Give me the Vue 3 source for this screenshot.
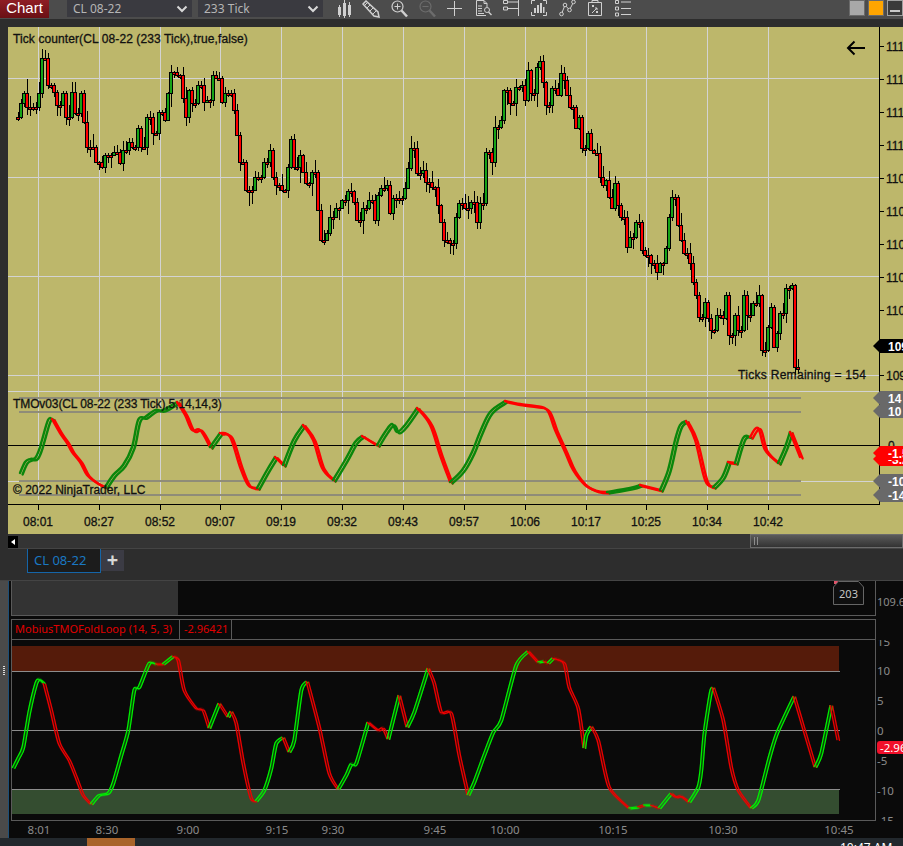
<template>
  <div class="page">
    <!-- верхняя панель -->
    <div class="toolbar">
      <div class="chart-btn">Chart</div>
      <div class="select first"><span>CL 08-22</span><svg width="12" height="8" viewBox="0 0 12 8"><path d="M1.5 1.5 6 6l4.5-4.5" fill="none" stroke="#d8d8d8" stroke-width="2"/></svg></div>
      <div class="select"><span>233 Tick</span><svg width="12" height="8" viewBox="0 0 12 8"><path d="M1.5 1.5 6 6l4.5-4.5" fill="none" stroke="#d8d8d8" stroke-width="2"/></svg></div>
      <div class="tools">
        <svg class="tool" style="width:15px" viewBox="0 0 15 18"><path d="M1 7h3v8H1zM6 3h3v13H6zM11 5h3v10h-3z" fill="#d0d0d0"/><path d="M2.500 5v12M7.500 0v18M12.500 2v15" stroke="#d0d0d0" fill="none"/></svg>
        <svg class="tool" style="width:18px;margin-left:10px" viewBox="0 0 18 18"><path d="M1 4 4 1l12 11 1 5-5-1z" fill="none" stroke="#d0d0d0" stroke-width="1.500"/><path d="M2 6l3-3M5 8l3-3M8 11l3-3M11 14l3-3" stroke="#d0d0d0"/></svg>
        <svg class="tool" style="width:17px;margin-left:11px" viewBox="0 0 17 18"><circle cx="6.500" cy="6.500" r="5.500" fill="none" stroke="#d0d0d0" stroke-width="1.200"/><path d="M3.500 6.500h6M6.500 3.500v6" stroke="#d0d0d0"/><path d="M10.500 10.500l5.500 6" stroke="#d0d0d0" stroke-width="2.500"/></svg>
        <svg class="tool" style="width:17px;margin-left:11px" viewBox="0 0 17 18"><circle cx="6.500" cy="6.500" r="5.500" fill="none" stroke="#6c6c6c" stroke-width="1.200"/><path d="M3.500 6.500h6" stroke="#6c6c6c"/><path d="M10.500 10.500l5.500 6" stroke="#6c6c6c" stroke-width="2.500"/></svg>
        <svg class="tool" style="width:15px;margin-left:11px" viewBox="0 0 15 18"><path d="M0 8.500h15M7.500 1v15" stroke="#d0d0d0" fill="none"/></svg>
        <svg class="tool" style="width:17px;margin-left:13px" viewBox="0 0 17 18"><path d="M9 .5H1.500v15H11M9 .5l3 3V7M9 .5v3h3" fill="none" stroke="#d0d0d0"/><path d="M3 6h4M3 8.500h4M3 11h4M3 13.500h6" stroke="#d0d0d0"/><circle cx="12" cy="10" r="2.500" fill="none" stroke="#d0d0d0"/><path d="M13.500 12l3 3" stroke="#d0d0d0" stroke-width="1.400"/></svg>
        <svg class="tool" style="width:16px;margin-left:11px" viewBox="0 0 16 18"><path d="M.5.500h4v3h-4zM.5 7h4v3h-4z" fill="none" stroke="#d0d0d0"/><path d="M4.500 2h11M4.500 8.500h11M15.500 0v16" stroke="#d0d0d0" fill="none"/></svg>
        <svg class="tool" style="width:16px;margin-left:12px" viewBox="0 0 16 18"><path d="M.5 4V.500h3.500M12 .5h3.500V4M.5 12v3.500H4M12 15.500h3.500V12" fill="none" stroke="#d0d0d0"/><path d="M3 8h2v5H3zM6 5h2v8H6zM9 3h2v10H9zM12 7h1.500v6H12z" fill="#d0d0d0"/></svg>
        <svg class="tool" style="width:17px;margin-left:12px" viewBox="0 0 17 18"><path d="M2.500 14 6 5l4.500 5 4-8" fill="none" stroke="#d0d0d0"/><circle cx="2.500" cy="14" r="1.800" fill="#4c4c4c" stroke="#d0d0d0"/><circle cx="6" cy="5" r="1.800" fill="#4c4c4c" stroke="#d0d0d0"/><circle cx="10.500" cy="10" r="1.800" fill="#4c4c4c" stroke="#d0d0d0"/><circle cx="14.500" cy="2" r="1.800" fill="#4c4c4c" stroke="#d0d0d0"/></svg>
        <svg class="tool" style="width:14px;margin-left:12px" viewBox="0 0 14 18"><path d="M.5 2.500h13v13H.5zM4 2.500V.500h6v2" fill="none" stroke="#d0d0d0"/><path d="M4 5l2 2M6 5 4 7M8 11l2 2M10 11l-2 2M4 13l5-5M7 8h2v2" stroke="#d0d0d0" fill="none"/></svg>
        <svg class="tool" style="width:16px;margin-left:13px" viewBox="0 0 16 18"><path d="M.5.500h3v3h-3zM.5 7h3v3h-3zM.5 13h3v3h-3z" fill="none" stroke="#d0d0d0"/><path d="M6 2h10M6 8.500h10M6 14.500h10" stroke="#d0d0d0"/></svg>
      </div>
      <div class="win-btns">
        <div class="win-btn gray"></div>
        <div class="win-btn orange"></div>
        <div class="win-btn min"><i></i></div>
      </div>
    </div>

    <!-- основной график -->
    <div class="chart">
      <svg class="plot" width="895" height="507" viewBox="8 27 895 507">
        <rect x="8" y="27" width="895" height="507" fill="#bdb76b" />
        <g shape-rendering="crispEdges" stroke="#d3d3d3" fill="none">
          <path v-for="x in gridX" :key="x" :d="`M${x + 0.5} 27V500`" />
          <path v-for="y in [78, 177, 276, 375, 391, 481]" :key="y" :d="`M8 ${y + 0.5}H879`" />
        </g>

        <path :d="wicks" stroke="#000" fill="none" shape-rendering="crispEdges" />
        <g shape-rendering="crispEdges" stroke="#000">
          <rect v-for="b in bars" :key="b.x" :x="b.x - 1.5" :y="b.y + 0.5" width="3" :height="b.h" :fill="b.up ? '#17a317' : '#ff0000'" />
        </g>

        <text class="t-main sp-a" x="13" y="43">Tick counter(CL 08-22 (233 Tick),true,false)</text>
        <path d="M865 48H848M854.500 41.500 848 48l6.500 6.500" fill="none" stroke="#000" stroke-width="2" />
        <text class="t-main sp-b" x="738" y="379">Ticks Remaining = 154</text>

        <!-- индикатор -->
        <g stroke="#8f8c78" stroke-width="2" shape-rendering="crispEdges">
          <path v-for="y in [398, 412, 481, 495]" :key="y" :d="`M19 ${y}H801`" />
        </g>
        <path d="M8 445.500H879" stroke="#000" shape-rendering="crispEdges" />
        <g v-for="(s, i) in tmoPaths" :key="i" fill="none" stroke-width="2.400" stroke-linecap="round" :stroke="s.c === 'g' ? '#0b860b' : '#ff0000'">
          <path :d="s.d" />
          <path :d="s.d" transform="translate(2.600 1.400)" />
        </g>
        <text class="t-main sp-c" x="13" y="408">TMOv03(CL 08-22 (233 Tick),5,14,14,3)</text>
        <text class="t-main" x="13" y="494">© 2022 NinjaTrader, LLC</text>

        <!-- оси -->
        <path d="M879.500 27V504.500H8" fill="none" stroke="#000" shape-rendering="crispEdges" />
        <g shape-rendering="crispEdges" stroke="#000">
          <path v-for="t in timeLabels" :key="t.l" :d="`M${t.x + 0.5} 505v5`" />
          <path v-for="p in priceLabels" :key="p.y" :d="`M880 ${p.y + 0.5}h4`" />
        </g>
        <text v-for="t in timeLabels" :key="t.l" class="t-main" :x="t.x" y="526" text-anchor="middle">{{ t.l }}</text>
        <text v-for="p in priceLabels" :key="p.y" class="t-main" x="886" :y="p.y + 5">{{ p.l }}</text>

        <text class="t-main" x="888" y="450">0</text>
        <template v-for="f in flags" :key="f.y">
          <polygon :points="`873,${f.y} 880,${f.y - 7} 903,${f.y - 7} 903,${f.y + 7} 880,${f.y + 7}`" :fill="f.c" />
          <text class="t-flag" x="888" :y="f.y + 5">{{ f.l }}</text>
        </template>
      </svg>
    </div>

    <!-- скролл -->
    <div class="scroll-row">
      <div class="scroll-left"><i></i></div>
      <div class="scroll-thumb"><b></b><b></b></div>
    </div>

    <!-- вкладки -->
    <div class="tabs">
      <div class="tab">CL 08-22</div>
      <div class="tab-add">+</div>
    </div>

    <!-- нижнее окно -->
    <div class="lower">
      <div class="grip"><i v-for="n in 5" :key="n"></i></div>
      <svg class="low-plot" width="895" height="257" viewBox="8 581 895 257">
        <rect x="8" y="581" width="895" height="257" fill="#0a0a0a" />
        <path d="M8.500 581V838" stroke="#1d4f78" shape-rendering="crispEdges" />
        <rect x="11" y="581" width="167" height="34" fill="#333" />
        <g fill="none" stroke="#5a5a5a" shape-rendering="crispEdges">
          <path d="M11.500 581V615.500H875.500V581" />
          <path d="M11.500 619.500H875.500V820.500H11.500Z" />
          <path d="M11.500 639.500H875.500M179.500 620V639M231.500 620V639" />
        </g>
        <path d="M834 581h4l-1 3h-3z" fill="#e0556a" />
        <path d="M833.500 587l5-5.500h20l5 5.500v17.500h-30z" fill="#0f0f0f" stroke="#666" />
        <text class="t-low" x="848.500" y="598" text-anchor="middle" fill="#c4c4c4">203</text>
        <text class="t-low" x="877" y="606" fill="#8a8a8a">109.6</text>

        <text class="t-low t-title" x="15" y="633">MobiusTMOFoldLoop (14, 5, 3)</text>
        <text class="t-low t-title" x="184" y="633">-2.96421</text>

        <rect x="12" y="646" width="827" height="25" fill="#551b0a" />
        <rect x="12" y="789" width="827" height="25" fill="#344d30" />
        <g stroke="#8c8c8c" shape-rendering="crispEdges">
          <path d="M12 671.500H840M12 730.500H840M12 789.500H840" />
        </g>
        <g v-for="(s, i) in lowPaths" :key="i" fill="none" :stroke="s.c === 'g' ? '#00f000' : '#ee0000'">
          <path :d="s.d" stroke-width="4" opacity="0.25" transform="translate(1.200 0.400)" />
          <path :d="s.d" stroke-width="1.200" />
          <path :d="s.d" stroke-width="1.200" transform="translate(2.600 0.800)" />
        </g>

        <text v-for="a in lowAxis" :key="a.l" class="t-axis" x="877" :y="a.y">{{ a.l }}</text>
        <rect x="876" y="634" width="27" height="6" fill="#0a0a0a" />
        <rect x="876" y="821" width="27" height="17" fill="#0a0a0a" />
        <rect x="877" y="741" width="30" height="13" rx="3" fill="#f0102a" />
        <text class="t-axis t-badge" x="880" y="752">-2.96</text>
        <text v-for="t in lowTimes" :key="t.l" class="t-axis" :x="t.x" y="834" text-anchor="middle">{{ t.l }}</text>
      </svg>
    </div>

    <div class="status">
      <div class="status-orange"></div>
      <span class="status-time">10:47 AM</span>
    </div>
  </div>
</template>

<script setup>
// опорные точки цены (x,y в пикселях экрана)
const pricePts = '18,117 20,103 25,93 27,107 35,107 38,93 42,58 50,60 50,85 53,92 58,105 63,93 68,117 72,92 77,113 80,93 83,122 88,147 93,147 97,162 103,167 107,155 117,152 118,163 125,150 128,170 128,142 135,147 137,128 143,147 148,117 157,133 160,112 165,120 168,93 173,72 180,75 182,98 185,117 190,90 193,103 200,85 203,102 210,100 212,75 218,78 222,102 227,93 232,93 235,110 237,135 238,147 242,162 245,157 247,190 260,177 265,162 270,150 273,177 278,185 283,190 288,167 292,139 295,167 300,155 303,172 308,183 313,172 319,177 319,210 323,240 328,233 332,217 337,208 345,200 350,191 353,202 360,220 365,208 370,200 375,220 377,195 382,188 387,185 389,213 393,198 400,198 405,188 407,168 412,148 416,148 418,173 423,170 428,182 435,187 438,205 442,222 445,240 452,243 455,217 460,203 468,208 473,202 477,222 483,203 485,185 487,152 492,162 493,137 497,127 500,120 503,90 508,90 512,103 517,87 523,85 525,100 528,70 533,93 537,67 542,61 543,82 548,105 555,88 560,95 562,73 566,80 568,95 572,107 575,128 580,117 583,148 588,133 590,150 597,153 598,177 603,185 608,180 610,197 613,208 617,183 619,205 622,217 627,247 632,237 637,222 642,250 647,255 652,263 657,272 662,263 665,248 670,217 674,197 678,225 682,240 685,253 690,263 692,282 695,295 700,317 705,302 708,318 713,330 718,315 725,318 727,295 730,335 735,315 740,330 743,295 750,315 755,303 760,295 763,350 768,327 771,307 773,347 778,333 782,313 787,288 792,285 793,320 797,367 800,346'
  .split(' ').map((p) => p.split(',').map(Number))

const rnd = (() => {
  let s = 20220815
  return () => {
    s = (s * 1664525 + 1013904223) % 4294967296
    return s / 4294967296
  }
})()

// ближайшая опорная точка — так тела свечей выходят высокими, как на бирже
const priceAt = (x) => {
  let best = pricePts[0]
  for (const p of pricePts) {
    if (Math.abs(p[0] - x) <= Math.abs(best[0] - x)) best = p
  }
  return best[1]
}

const bars = []
let wicks = ''
let prev = priceAt(15)
for (let x = 18; x <= 800; x += 3) {
  const close = priceAt(x)
  const top = Math.min(prev, close)
  const bot = Math.max(prev, close)
  const h = Math.max(bot - top, 2)
  bars.push({ x, y: top, h, up: close < prev })
  const hi = top - 1 - Math.round(rnd() * rnd() * 14)
  const lo = top + h + 1 + Math.round(rnd() * rnd() * 16)
  wicks += `M${x + 0.5} ${hi}V${lo}`
  prev = close
}

const gridX = [38, 99, 160, 220, 281, 342, 403, 464, 525, 586, 646, 707, 768]
const times = ['08:01', '08:27', '08:52', '09:07', '09:19', '09:32', '09:43', '09:57', '10:06', '10:17', '10:25', '10:34', '10:42']
const timeLabels = gridX.map((x, i) => ({ x, l: times[i] }))

const priceLabels = [
  { y: 46, l: '111.50' }, { y: 79, l: '111.25' }, { y: 112, l: '111.00' }, { y: 145, l: '111.75' },
  { y: 178, l: '110.50' }, { y: 211, l: '110.25' }, { y: 244, l: '110.00' }, { y: 277, l: '110.75' },
  { y: 310, l: '110.50' }, { y: 375, l: '109.75' },
]

const flags = [
  { y: 346, l: '109.80', c: '#000' },
  { y: 398, l: '14', c: '#696969' },
  { y: 411, l: '10', c: '#696969' },
  { y: 459, l: '-3.20', c: '#ff0000' },
  { y: 453, l: '-1.50', c: '#ff0000' },
  { y: 481, l: '-10', c: '#696969' },
  { y: 495, l: '-14', c: '#696969' },
]

// сглаживание ломаной в кривую (Catmull-Rom)
const smooth = (str, t) => {
  const p = str.split(' ').map((q) => q.split(',').map(Number))
  let d = `M${p[0][0]} ${p[0][1]}`
  for (let i = 0; i < p.length - 1; i++) {
    const a = p[i - 1] || p[i]
    const b = p[i]
    const c = p[i + 1]
    const e = p[i + 2] || c
    d += `C${b[0] + (c[0] - a[0]) * t} ${b[1] + (c[1] - a[1]) * t} ${c[0] - (e[0] - b[0]) * t} ${c[1] - (e[1] - b[1]) * t} ${c[0]} ${c[1]}`
  }
  return d
}

// сегменты TMO: g — растёт, r — падает
const tmoSegs = [
  ['g', '20,473 25,462 30,459 35,458 39,450 42,440 48,420 52,419'],
  ['r', '52,419 60,433 67,443 72,452 80,462 87,475 97,483 105,487'],
  ['g', '105,487 113,475 123,465 132,447 138,420 145,417 155,410 163,410 177,402'],
  ['r', '177,402 185,415 192,430 200,430 210,447'],
  ['g', '210,447 220,433'],
  ['r', '220,433 230,437 240,467 248,485 257,488'],
  ['g', '257,488 267,470 275,457'],
  ['r', '275,457 283,465'],
  ['g', '283,465 293,440 303,425'],
  ['r', '303,425 313,440 322,468 333,480'],
  ['g', '333,480 345,460 355,442 362,436'],
  ['r', '362,436 370,441 377,445'],
  ['g', '377,445 385,432 392,424 397,432 405,425 417,408'],
  ['r', '417,408 430,425 440,455 450,482'],
  ['g', '450,482 462,470 472,452 480,432 490,412 505,401'],
  ['r', '505,401 520,404 535,406 547,410 555,430 565,452 573,470 585,485 597,491 607,492'],
  ['g', '607,492 630,488 640,485'],
  ['r', '640,485 660,490'],
  ['g', '660,490 668,470 675,440 680,425 686,421'],
  ['r', '686,421 695,440 705,480 713,487'],
  ['g', '713,487 722,477 728,462'],
  ['r', '728,462 735,463'],
  ['g', '735,463 743,438 750,437'],
  ['r', '750,437 758,428 765,450 778,463'],
  ['g', '778,463 785,447 790,432'],
  ['r', '790,432 800,457'],
]
const tmoPaths = tmoSegs.map((s) => ({ c: s[0], d: smooth(s[1], 0.18) }))

// сегменты нижнего осциллятора
const lowSegs = [
  ['g', '12,768 17,758 22,747 28,712 35,683 38,679 43,683'],
  ['r', '43,683 50,710 58,743 68,760 75,777 82,795 90,804'],
  ['g', '90,804 98,795 107,793 112,783 120,755 127,730 133,690 138,687 148,663 155,664'],
  ['r', '155,664 162,664'],
  ['g', '162,664 172,656'],
  ['r', '172,656 177,660 183,690 195,708 202,710 208,728'],
  ['g', '208,728 218,703'],
  ['r', '218,703 227,717'],
  ['g', '227,717 230,711'],
  ['r', '230,711 235,723 242,763 250,798 255,801'],
  ['g', '255,801 263,790 270,768 275,743 282,737'],
  ['r', '282,737 288,752'],
  ['g', '288,752 293,740 300,690 306,681'],
  ['r', '306,681 318,727 328,773 337,789'],
  ['g', '337,789 345,775 350,764 355,763 367,722'],
  ['r', '367,722 377,730 382,728 387,739'],
  ['g', '387,739 398,695'],
  ['r', '398,695 406,727'],
  ['g', '406,727 413,712 427,668'],
  ['r', '427,668 433,683 440,712 450,713 458,755 467,795'],
  ['g', '467,795 473,782 483,755 492,732 500,720 515,665 527,651'],
  ['r', '527,651 537,662'],
  ['g', '537,662 543,661'],
  ['r', '543,661 547,663'],
  ['g', '547,663 552,658'],
  ['r', '552,658 563,663 568,687 577,708 583,748'],
  ['g', '583,748 585,735 590,726'],
  ['r', '590,726 597,740 608,787 628,808'],
  ['g', '628,808 637,807'],
  ['r', '637,807 643,805'],
  ['g', '643,805 650,805'],
  ['r', '650,805 658,808'],
  ['g', '658,808 670,793'],
  ['r', '670,793 675,797 680,796 688,802'],
  ['g', '688,802 697,787 700,770 703,735 707,707 710,690 712,687'],
  ['r', '712,687 722,720 730,767 737,790 750,808'],
  ['g', '750,808 757,800 768,758 775,735 783,717 793,696'],
  ['r', '793,696 803,730 814,767'],
  ['g', '814,767 820,753 830,705'],
  ['r', '830,705 837,740'],
]
const lowPaths = lowSegs.map((s) => ({ c: s[0], d: smooth(s[1], 0.12) }))

const lowAxis = [
  { y: 646, l: '15' }, { y: 675, l: '10' }, { y: 705, l: '5' }, { y: 735, l: '0' },
  { y: 765, l: '-5' }, { y: 795, l: '-10' }, { y: 825, l: '-15' },
]

const lowTimes = [
  { x: 39, l: '8:01' }, { x: 107, l: '8:30' }, { x: 188, l: '9:00' }, { x: 277, l: '9:15' }, { x: 333, l: '9:30' },
  { x: 435, l: '9:45' }, { x: 505, l: '10:00' }, { x: 613, l: '10:15' }, { x: 723, l: '10:30' }, { x: 839, l: '10:45' },
]
</script>

<style scoped>
.page {
  width: 903px;
  height: 846px;
  overflow: hidden;
  display: flex;
  flex-direction: column;
  background: #2d2d2d;
  font-family: "Liberation Sans", Arial, sans-serif;
}

.toolbar {
  height: 19px;
  flex-shrink: 0;
  display: flex;
  align-items: flex-start;
  background: #4c4c4c;
  margin-bottom: 8px;
}

.chart-btn {
  width: 49px;
  height: 18px;
  line-height: 16px;
  text-align: center;
  color: #fff;
  font-size: 15px;
  background: linear-gradient(#8f1d24, #6a1015);
}

.select {
  width: 125px;
  height: 17px;
  margin-left: 6px;
  padding: 0 4px 0 6px;
  box-sizing: border-box;
  display: flex;
  align-items: center;
  justify-content: space-between;
  background: #3a3a40;
  color: #b5b5b5;
  font-family: "Noto Sans", sans-serif;
  font-size: 12px;
}

.select.first {
  margin-left: 18px;
}

.tools {
  display: flex;
  margin-left: 14px;
}

.tool {
  height: 18px;
  flex-shrink: 0;
}

.win-btns {
  margin-left: auto;
  display: flex;
  gap: 3px;
}

.win-btn {
  width: 16px;
  height: 16px;
  border: 1px solid #6a6a6a;
  box-sizing: border-box;
}

.win-btn.gray {
  background: #a8a8a8;
}

.win-btn.orange {
  background: #ffa500;
}

.win-btn.min {
  background: #3a3a3a;
  border-color: #a0a0a0;
  position: relative;
}

.win-btn.min i {
  position: absolute;
  left: 2px;
  right: 2px;
  bottom: 3px;
  height: 2px;
  background: #c8c8c8;
}

.chart {
  margin-left: 8px;
  height: 507px;
  flex-shrink: 0;
}

.plot,
.low-plot {
  display: block;
}

.t-main {
  font-family: "Liberation Sans", Arial, sans-serif;
  font-size: 12px;
  fill: #111;
  stroke: #111;
  stroke-width: 0.3px;
}

.sp-a {
  letter-spacing: 0.1px;
}

.sp-b {
  letter-spacing: 0.3px;
}

.sp-c {
  letter-spacing: -0.1px;
}

.t-flag {
  font-family: "Liberation Sans", Arial, sans-serif;
  font-size: 12px;
  font-weight: bold;
  fill: #fff;
}

.scroll-row {
  height: 15px;
  margin-left: 8px;
  flex-shrink: 0;
  display: flex;
  background: #343434;
  border-bottom: 1px solid #444;
  box-sizing: border-box;
}

.scroll-left {
  width: 10px;
  height: 12px;
  margin-top: 2px;
  background: #000;
  position: relative;
}

.scroll-left i {
  position: absolute;
  left: 3px;
  top: 3px;
  border: 3px solid transparent;
  border-left: 0;
  border-right: 4px solid #fff;
}

.scroll-thumb {
  margin-left: auto;
  width: 153px;
  height: 14px;
  box-sizing: border-box;
  border: 1px solid #6b6b6b;
  background: linear-gradient(#5b5b5b, #333);
  display: flex;
  gap: 2px;
  align-items: center;
  padding-left: 3px;
}

.scroll-thumb b {
  width: 1px;
  height: 8px;
  background: #8c8c8c;
}

.tabs {
  height: 32px;
  flex-shrink: 0;
  display: flex;
  align-items: flex-start;
  padding-left: 27px;
  border-bottom: 1px solid #444;
  box-sizing: border-box;
  background: #2d2d2d;
}

.tab {
  width: 74px;
  height: 24px;
  padding-left: 6px;
  box-sizing: border-box;
  border: 1px solid #1565a8;
  border-top: 0;
  background: #1c1c1c;
  color: #1a78c2;
  font-family: "Noto Sans", sans-serif;
  font-size: 13px;
  line-height: 22px;
}

.tab-add {
  width: 23px;
  height: 21px;
  margin-top: 1px;
  background: #3b3b44;
  color: #d8d8d8;
  font-family: "Noto Sans", sans-serif;
  font-size: 20px;
  font-weight: bold;
  line-height: 20px;
  text-align: center;
}

.lower {
  height: 257px;
  flex-shrink: 0;
  display: flex;
}

.grip {
  width: 8px;
  flex-shrink: 0;
  background: #4a4a4a;
  display: flex;
  flex-direction: column;
  align-items: center;
  gap: 1px;
  padding-top: 85px;
  box-sizing: border-box;
}

.grip i {
  width: 2px;
  height: 1px;
  background: #ddd;
}

.t-low {
  font-family: "Noto Sans", sans-serif;
  font-size: 11px;
}

.t-axis {
  font-family: "Noto Sans", sans-serif;
  font-size: 11.500px;
  fill: #8a8a8a;
}

.t-badge {
  fill: #fff;
}

.t-title {
  fill: #e00000;
}

.status {
  height: 8px;
  flex-shrink: 0;
  background: #22282d;
  position: relative;
  overflow: hidden;
}

.status-orange {
  position: absolute;
  left: 87px;
  top: 0;
  width: 48px;
  height: 8px;
  background: #a9642a;
}

.status-time {
  position: absolute;
  left: 840px;
  top: 3px;
  color: #fff;
  font-family: "Noto Sans", sans-serif;
  font-size: 12px;
  line-height: 14px;
}
</style>
